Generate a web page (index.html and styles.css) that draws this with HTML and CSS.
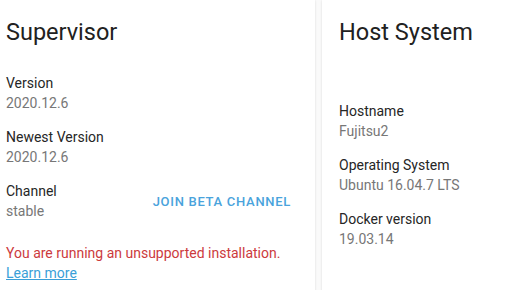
FILE: index.html
```html
<!DOCTYPE html>
<html lang="en">
  <head>
    <meta charset="UTF-8" />
    <meta name="viewport" content="width=device-width, initial-scale=1.0" />
    <title>System</title>
    <link rel="stylesheet" href="styles.css">
  </head>
  <body>
    <div class="cards">
      <div class="card card-supervisor">
        <h1 class="card-header">Supervisor</h1>
        <div class="card-content">
          <div class="info-row">
            <div class="info-text">
              <div class="label">Version</div>
              <div class="value">2020.12.6</div>
            </div>
          </div>
          <div class="info-row">
            <div class="info-text">
              <div class="label">Newest Version</div>
              <div class="value">2020.12.6</div>
            </div>
          </div>
          <div class="info-row">
            <div class="info-text">
              <div class="label">Channel</div>
              <div class="value">stable</div>
            </div>
            <button class="text-button">Join beta channel</button>
          </div>
          <div class="warning">
            You are running an unsupported installation.<br />
            <a href="#">Learn more</a>
          </div>
        </div>
      </div>

      <div class="card card-host">
        <h1 class="card-header">Host System</h1>
        <div class="card-content">
          <div class="info-row">
            <div class="info-text">
              <div class="label">Hostname</div>
              <div class="value">Fujitsu2</div>
            </div>
          </div>
          <div class="info-row">
            <div class="info-text">
              <div class="label">Operating System</div>
              <div class="value">Ubuntu 16.04.7 LTS</div>
            </div>
          </div>
          <div class="info-row">
            <div class="info-text">
              <div class="label">Docker version</div>
              <div class="value">19.03.14</div>
            </div>
          </div>
        </div>
      </div>
    </div>
  </body>
</html>
```

FILE: styles.css
```css
body {
  font-family: Roboto, "Noto Sans", sans-serif;
  background-color: #fafafa;
  color: #212121;
  margin: 0;
  padding: 0;
  overflow: hidden;
}

.cards {
  display: flex;
  gap: 7px;
  align-items: flex-start;
}

.card {
  background-color: #fff;
  min-height: 330px;
  box-shadow: 0 0 2px rgba(0, 0, 0, 0.08), 0 1px 3px rgba(0, 0, 0, 0.06);
}

.card-supervisor {
  flex: none;
  width: 315px;
  box-sizing: border-box;
  padding: 0 16px 0 6px;
}

.card-host {
  flex: 1;
  padding: 0 16px 0 17px;
}

.card-header {
  margin: 0;
  padding-top: 16px;
  font-size: 23.5px;
  font-weight: 400;
  line-height: 32px;
  color: #212121;
}

.card-supervisor .card-content {
  padding-top: 25px;
}

.card-host .card-content {
  padding-top: 53px;
}

.info-row {
  display: flex;
  justify-content: space-between;
  align-items: center;
  margin-bottom: 14px;
}

.label,
.value {
  font-size: 14px;
  line-height: 20px;
}

.label {
  color: #262626;
}

.value {
  color: #777;
}

.text-button {
  font-family: inherit;
  font-size: 13px;
  font-weight: 500;
  letter-spacing: 0.7px;
  text-transform: uppercase;
  color: #4aa3dc;
  background: none;
  border: none;
  padding: 0 8px;
  height: 36px;
  cursor: pointer;
}

.warning {
  margin-top: 22px;
  font-size: 14px;
  line-height: 20px;
  color: #cc3a3d;
}

.warning a {
  color: #3a9fd8;
}
```
